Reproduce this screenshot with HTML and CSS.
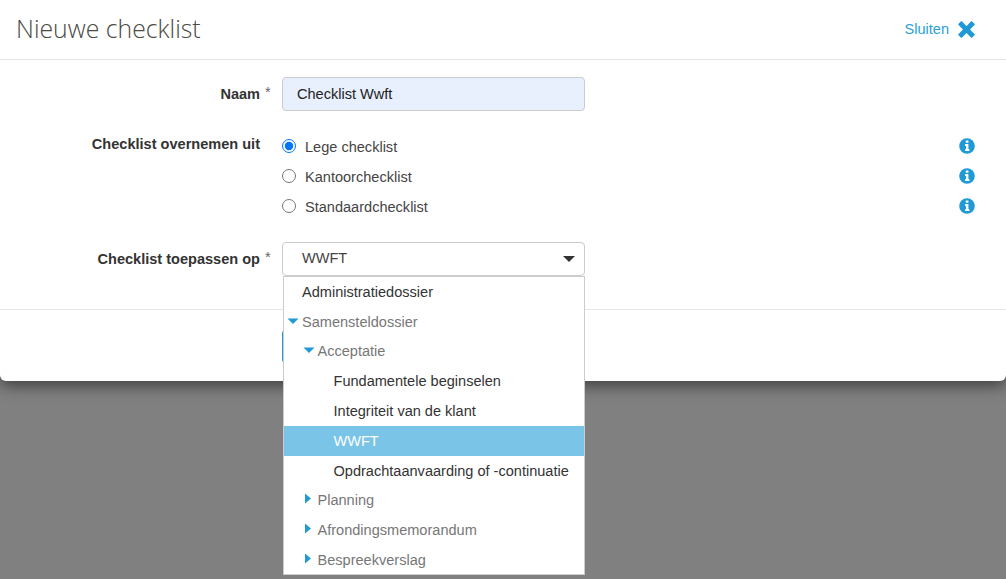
FILE: index.html
```html
<!DOCTYPE html>
<html lang="nl">
<head>
<meta charset="utf-8">
<title>Nieuwe checklist</title>
<link rel="stylesheet" href="styles.css">
</head>
<body>
<div class="modal">
  <header class="modal-header">
    <h1 class="title">Nieuwe checklist</h1>
    <a class="close" href="#">Sluiten
      <svg class="close-icon" viewBox="0 0 18 18" width="17" height="17"><path d="M3.6 0.8 9 6.2 14.400 0.800 17.200 3.600 11.800 9 17.200 14.400 14.400 17.200 9 11.800 3.600 17.200 0.800 14.400 6.200 9 0.800 3.600Z" stroke="#1f9ad6" stroke-width="1.200" stroke-linejoin="round" fill="#1f9ad6"/></svg>
    </a>
  </header>
  <form class="form">
    <div class="row row-name">
      <label class="label">Naam<span class="star">*</span></label>
      <input class="input" type="text" value="Checklist Wwft">
    </div>
    <div class="row row-radios">
      <label class="label label-radios">Checklist overnemen uit<span class="star"></span></label>
      <div class="radios">
        <div class="radio-row">
          <input class="radio" type="radio" name="src" checked><span class="radio-text">Lege checklist</span>
          <svg class="info" viewBox="0 0 16 16" width="16" height="16"><circle cx="8" cy="8" r="7.8" fill="#1f9ad6"/><path d="M6.8 2.6h2.6v2.2H6.8ZM6 6h3.4v5.2h1v1.9H6v-1.9h1V7.9H6Z" fill="#fff"/></svg>
        </div>
        <div class="radio-row">
          <input class="radio" type="radio" name="src"><span class="radio-text">Kantoorchecklist</span>
          <svg class="info" viewBox="0 0 16 16" width="16" height="16"><circle cx="8" cy="8" r="7.8" fill="#1f9ad6"/><path d="M6.8 2.6h2.6v2.2H6.8ZM6 6h3.4v5.2h1v1.9H6v-1.9h1V7.9H6Z" fill="#fff"/></svg>
        </div>
        <div class="radio-row">
          <input class="radio" type="radio" name="src"><span class="radio-text">Standaardchecklist</span>
          <svg class="info" viewBox="0 0 16 16" width="16" height="16"><circle cx="8" cy="8" r="7.8" fill="#1f9ad6"/><path d="M6.8 2.6h2.6v2.2H6.8ZM6 6h3.4v5.2h1v1.9H6v-1.9h1V7.9H6Z" fill="#fff"/></svg>
        </div>
      </div>
    </div>
    <div class="row row-select">
      <label class="label">Checklist toepassen op<span class="star">*</span></label>
      <div class="select-wrap">
        <div class="select">WWFT<span class="caret"></span></div>
        <ul class="tree">
          <li class="item l0 leaf"><span class="exp"></span>Administratiedossier</li>
          <li class="item l0 branch"><span class="exp"><svg viewBox="0 0 16 10" width="16" height="10"><path d="M1.500 2.500H12.500L7 8Z" fill="#1f9ad6"/></svg></span>Samensteldossier</li>
          <li class="item l1 branch"><span class="exp"><svg viewBox="0 0 16 10" width="16" height="10"><path d="M1.500 2.500H12.500L7 8Z" fill="#1f9ad6"/></svg></span>Acceptatie</li>
          <li class="item l2 leaf"><span class="exp"></span>Fundamentele beginselen</li>
          <li class="item l2 leaf"><span class="exp"></span>Integriteit van de klant</li>
          <li class="item l2 leaf selected"><span class="exp"></span>WWFT</li>
          <li class="item l2 leaf"><span class="exp"></span>Opdrachtaanvaarding of -continuatie</li>
          <li class="item l1 branch"><span class="exp"><svg viewBox="0 0 16 12" width="16" height="12"><path d="M3 0.500 9 5.500 3 10.500Z" fill="#1f9ad6"/></svg></span>Planning</li>
          <li class="item l1 branch"><span class="exp"><svg viewBox="0 0 16 12" width="16" height="12"><path d="M3 0.500 9 5.500 3 10.500Z" fill="#1f9ad6"/></svg></span>Afrondingsmemorandum</li>
          <li class="item l1 branch"><span class="exp"><svg viewBox="0 0 16 12" width="16" height="12"><path d="M3 0.500 9 5.500 3 10.500Z" fill="#1f9ad6"/></svg></span>Bespreekverslag</li>
        </ul>
      </div>
    </div>
  </form>
  <footer class="modal-footer">
    <button class="primary" type="button"></button>
  </footer>
</div>
</body>
</html>
```
FILE: styles.css
```css
* { box-sizing: border-box; }
html, body { margin: 0; height: 100%; }
body {
  background: #808080;
  font-family: "Liberation Sans", Arial, sans-serif;
  font-size: 14.56px;
  line-height: 20px;
  color: #333;
  overflow: hidden;
}
.modal {
  background: #fff;
  height: 381px;
  border-radius: 0 0 6px 6px;
  box-shadow: 0 5px 15px rgba(0, 0, 0, .5);
  display: flex;
  flex-direction: column;
}
.modal-header {
  height: 60px;
  flex: none;
  display: flex;
  align-items: center;
  justify-content: space-between;
  padding: 0 31px 1px 16px;
  border-bottom: 1px solid #e5e5e5;
}
.title {
  margin: 0 0 2px;
  font-family: "Open Sans", sans-serif;
  font-weight: 300;
  font-size: 24.8px;
  line-height: 30px;
  color: #4a4a44;
}
.close {
  display: flex;
  align-items: center;
  gap: 9px;
  color: #2b9fd9;
  text-decoration: none;
}
.close-icon { display: block; }
.form {
  flex: none;
  height: 250px;
  padding-top: 17px;
  border-bottom: 1px solid #e5e5e5;
}
.row { display: flex; }
.row-name { height: 34px; align-items: center; }
.row-radios { margin-top: 20px; height: 90px; }
.row-select { margin-top: 21px; height: 34px; align-items: center; }
.label {
  flex: none;
  width: 282px;
  display: flex;
  justify-content: flex-end;
  font-weight: 700;
}
.label-radios { padding-top: 3px; }
.star {
  flex: none;
  width: 22px;
  padding-left: 5px;
  font-weight: 400;
  line-height: 16px;
  color: #666;
}
.input {
  width: 303px;
  height: 34px;
  padding: 0 14px;
  background: #e8f0fe;
  border: 1px solid #ccc;
  border-radius: 4px;
  font: inherit;
  color: #222;
}
.radios { flex: 1; padding-right: 31px; }
.radio-row {
  display: flex;
  align-items: center;
  height: 30px;
}
.radio { margin: 0 9px 0 0; width: 14px; height: 14px; flex: none; }
.radio-text { color: #444; padding-top: 2px; }
.info { margin-left: auto; display: block; }
.select-wrap { position: relative; width: 303px; height: 34px; }
.select {
  height: 34px;
  padding-left: 19px;
  border: 1px solid #ccc;
  border-radius: 4px;
  line-height: 30px;
  position: relative;
  color: #444;
}
.caret {
  position: absolute;
  right: 9px;
  top: 13px;
  border-style: solid;
  border-width: 6px 6px 0;
  border-color: #333 transparent transparent;
}
.tree {
  position: absolute;
  left: 1px;
  top: 34px;
  width: 302px;
  margin: 0;
  padding: 0;
  list-style: none;
  background: #fff;
  border: 1px solid #ccc;
  height: 299px;
  z-index: 2;
}
.item {
  display: flex;
  align-items: center;
  height: 29.8px;
  white-space: nowrap;
}
.l0 { padding-left: 2px; }
.l1 { padding-left: 17.5px; }
.l2 { padding-left: 33.5px; }
.exp { flex: none; width: 16px; height: 16px; display: flex; margin-top: -2px; align-items: center; }
.exp svg { display: block; }
.leaf { color: #333; }
.branch { color: #777; }
.selected { background: #7ac4e7; color: #fff; }
.modal-footer { flex: 1; padding: 20px 0 0 282px; }
.primary {
  display: block;
  width: 100px;
  height: 33px;
  background: #fff;
  border: 1px solid #1f9ad6;
  border-radius: 3px;
  padding: 0;
}
```
